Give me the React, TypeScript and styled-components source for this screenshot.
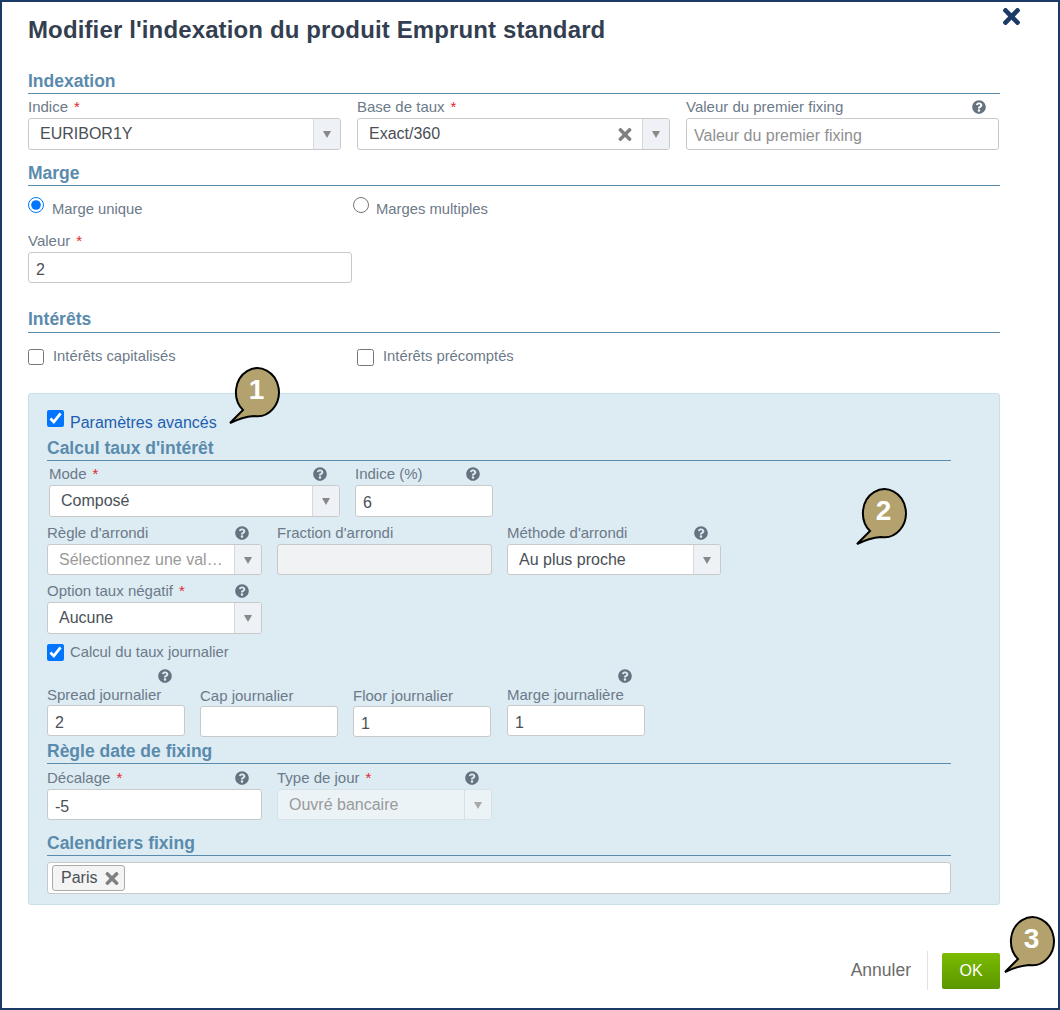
import React from "react";
import styled, { createGlobalStyle } from "styled-components";
import { FaQuestionCircle, FaTimes } from "react-icons/fa";

const GlobalStyle = createGlobalStyle`
  html, body {
    margin: 0;
    padding: 0;
    background: #fff;
  }
  * {
    box-sizing: border-box;
  }
  body {
    font-family: "Liberation Sans", Arial, sans-serif;
  }
`;

const Frame = styled.div`
  position: relative;
  width: 1060px;
  height: 1010px;
  padding: 15px 58px 0 26px;
  border: 2px solid #1c3a66;
  background: #fff;
  overflow: hidden;
`;

const Title = styled.h1`
  margin: 0;
  font-size: 24px;
  line-height: 26px;
  font-weight: 700;
  letter-spacing: 0.13px;
  color: #333f50;
`;

const CloseButton = styled.div`
  position: absolute;
  top: 2px;
  right: 34px;
  color: #1c3a66;
  font-size: 25px;
  line-height: 0;
`;

const SectionTitle = styled.h2<{ $top: number; $pad?: number }>`
  margin: ${(p) => p.$top}px 0 0;
  padding-bottom: ${(p) => p.$pad ?? 2}px;
  font-size: 17.5px;
  line-height: 20px;
  font-weight: 700;
  color: #5a8bad;
  border-bottom: 1px solid #5a8bad;
`;

const Row = styled.div<{ $top?: number; $indent?: number; $gap?: number }>`
  display: flex;
  align-items: flex-start;
  gap: ${(p) => p.$gap ?? 15}px;
  margin-top: ${(p) => p.$top ?? 0}px;
  padding-left: ${(p) => p.$indent ?? 0}px;
`;

const FieldBox = styled.div<{ $width: number; $down?: number; $left?: number }>`
  width: ${(p) => p.$width}px;
  flex: none;
  margin-top: ${(p) => p.$down ?? 0}px;
  margin-left: ${(p) => p.$left ?? 0}px;
`;

const LabelRow = styled.div<{ $height?: number }>`
  display: flex;
  align-items: center;
  justify-content: space-between;
  height: ${(p) => p.$height ?? 24}px;
  padding-right: 13px;
  font-size: 15px;
  color: #6c7a89;
  white-space: nowrap;
`;

const Star = styled.span`
  margin-left: 6px;
  color: #e0262d;
`;

const HelpRow = styled.div`
  display: flex;
  justify-content: flex-end;
  height: 14px;
  padding-right: 13px;
`;

const Help = styled(FaQuestionCircle)`
  flex: none;
  width: 14px;
  height: 14px;
  margin-top: 2px;
  color: #667280;

  ${HelpRow} & {
    margin-top: 0;
  }
`;

const TextInput = styled.input<{ $height?: number }>`
  display: block;
  width: 100%;
  height: ${(p) => p.$height ?? 32}px;
  padding: 4px 7px 0;
  border: 1px solid #c9c9c9;
  border-radius: 3px;
  background: #fff;
  font-family: inherit;
  font-size: 16px;
  color: #495057;
  outline: none;

  &::placeholder {
    color: #8f8f8f;
    opacity: 1;
  }

  &:disabled {
    background: #f1f2f3;
  }
`;

const SelectBox = styled.div<{ $height?: number; $disabled?: boolean }>`
  display: flex;
  align-items: stretch;
  height: ${(p) => p.$height ?? 32}px;
  border: 1px solid ${(p) => (p.$disabled ? "#d6e2e8" : "#c9c9c9")};
  border-radius: 3px;
  overflow: hidden;
  background: ${(p) => (p.$disabled ? "#ebf3f7" : "#fff")};
`;

const SelectValue = styled.div<{ $muted?: boolean }>`
  flex: 1;
  min-width: 0;
  padding-left: 11px;
  padding-right: 10px;
  font-size: 16px;
  line-height: 29px;
  color: ${(p) => (p.$muted ? "#9a9a9a" : "#495057")};
  white-space: nowrap;
  overflow: hidden;
  text-overflow: ellipsis;
`;

const ClearIcon = styled(FaTimes)`
  flex: none;
  align-self: center;
  width: 14px;
  height: 19px;
  margin-right: 10px;
  color: #808080;
`;

const ArrowBox = styled.div<{ $disabled?: boolean }>`
  flex: none;
  display: flex;
  align-items: center;
  justify-content: center;
  width: 27px;
  border-left: 1px solid ${(p) => (p.$disabled ? "#d6e2e8" : "#d9d9d9")};
  background: ${(p) => (p.$disabled ? "#ebf3f7" : "#eef1f5")};

  &::after {
    content: "";
    border-left: 4.5px solid transparent;
    border-right: 4.5px solid transparent;
    border-top: 7px solid ${(p) => (p.$disabled ? "#a9a9a9" : "#888")};
    margin-top: 1px;
  }
`;

const ChoiceRow = styled.div<{ $top: number; $height?: number }>`
  display: flex;
  align-items: flex-start;
  height: ${(p) => p.$height ?? 20}px;
  margin-top: ${(p) => p.$top}px;
`;

const Choice = styled.label<{ $width?: number; $gap?: number; $drop?: number }>`
  display: flex;
  align-items: flex-start;
  gap: ${(p) => p.$gap ?? 8}px;
  width: ${(p) => (p.$width ? `${p.$width}px` : "auto")};
  font-size: 14.8px;
  line-height: 16px;
  color: #6c7a89;

  & > span {
    margin-top: ${(p) => p.$drop ?? 0}px;
  }
`;

const Radio = styled.input.attrs({ type: "radio" })`
  flex: none;
  width: 16px;
  height: 16px;
  margin: 0;
`;

const Check = styled.input.attrs({ type: "checkbox" })<{ $size?: number }>`
  flex: none;
  width: ${(p) => p.$size ?? 17}px;
  height: ${(p) => p.$size ?? 17}px;
  margin: 0;
`;

const Panel = styled.section`
  margin-top: 28px;
  height: 512px;
  padding: 16px 48px 0 18px;
  border: 1px solid #c8dfe9;
  border-radius: 3px;
  background: #ddebf3;
`;

const AdvancedText = styled.span`
  font-size: 16px;
  line-height: 20px;
  color: #1d5fb0;
`;

const MultiBox = styled.div`
  display: flex;
  align-items: center;
  height: 32px;
  margin-top: 6px;
  padding-left: 4px;
  border: 1px solid #c9c9c9;
  border-radius: 3px;
  background: #fff;
`;

const Chip = styled.div`
  display: flex;
  align-items: center;
  gap: 8px;
  width: 73px;
  height: 26px;
  padding-left: 8px;
  border: 1px solid #aaa;
  border-radius: 3px;
  background: #f4f4f4;
  font-size: 16px;
  color: #495057;
`;

const ChipRemove = styled(FaTimes)`
  width: 14px;
  height: 19px;
  color: #808080;
`;

const Footer = styled.footer`
  display: flex;
  align-items: center;
  justify-content: flex-end;
  height: 39px;
  margin-top: 46px;
`;

const CancelLink = styled.span`
  font-size: 17.5px;
  color: #6b6b6b;
`;

const Divider = styled.div`
  width: 1px;
  height: 39px;
  margin: 0 14px 0 16px;
  background: #e2e2e2;
`;

const OkButton = styled.div`
  width: 58px;
  height: 36px;
  border-radius: 2px;
  background: linear-gradient(#7cbb00, #5a9600);
  color: #fff;
  font-size: 16px;
  line-height: 36px;
  text-align: center;
`;

const CalloutBox = styled.div<{ $x: number; $y: number }>`
  position: absolute;
  left: ${(p) => p.$x}px;
  top: ${(p) => p.$y}px;
  width: 54px;
  height: 60px;
`;

const CalloutDigit = styled.span`
  position: absolute;
  left: 7px;
  top: 7px;
  width: 43px;
  font-size: 28px;
  line-height: 36px;
  font-weight: 700;
  text-align: center;
  color: #fff;
`;

type CalloutProps = { n: number; x: number; y: number };

const Callout = ({ n, x, y }: CalloutProps) => (
  <CalloutBox $x={x} $y={y}>
    <svg width="54" height="60" viewBox="0 0 54 60">
      <path
        d="M2 58 L15 45 A21.5 24 0 1 1 26 50.9 Q14 52 2 58 Z"
        fill="#b3a26e"
        stroke="#000"
        strokeWidth="2"
        strokeLinejoin="miter"
      />
    </svg>
    <CalloutDigit>{n}</CalloutDigit>
  </CalloutBox>
);

type FieldLabelProps = { text: string; required?: boolean; help?: boolean };

const FieldLabel = ({ text, required, help }: FieldLabelProps) => (
  <LabelRow>
    <span>
      {text}
      {required && <Star>*</Star>}
    </span>
    {help && <Help />}
  </LabelRow>
);

type SelectProps = {
  value: string;
  height?: number;
  muted?: boolean;
  clearable?: boolean;
  disabled?: boolean;
};

const Select = ({ value, height, muted, clearable, disabled }: SelectProps) => (
  <SelectBox $height={height} $disabled={disabled}>
    <SelectValue $muted={muted}>{value}</SelectValue>
    {clearable && <ClearIcon />}
    <ArrowBox $disabled={disabled} />
  </SelectBox>
);

export default function App() {
  return (
    <>
      <GlobalStyle />
      <Frame>
        <Title>Modifier l'indexation du produit Emprunt standard</Title>
        <CloseButton>
          <FaTimes />
        </CloseButton>

        <SectionTitle $top={28}>Indexation</SectionTitle>
        <Row $gap={16}>
          <FieldBox $width={313}>
            <FieldLabel text="Indice" required />
            <Select value="EURIBOR1Y" />
          </FieldBox>
          <FieldBox $width={313}>
            <FieldLabel text="Base de taux" required />
            <Select value="Exact/360" clearable />
          </FieldBox>
          <FieldBox $width={313}>
            <FieldLabel text="Valeur du premier fixing" help />
            <TextInput placeholder="Valeur du premier fixing" readOnly />
          </FieldBox>
        </Row>

        <SectionTitle $top={13}>Marge</SectionTitle>
        <ChoiceRow $top={11}>
          <Choice $width={325} $drop={4}>
            <Radio name="marge" defaultChecked />
            <span>Marge unique</span>
          </Choice>
          <Choice $gap={7} $drop={4}>
            <Radio name="marge" />
            <span>Marges multiples</span>
          </Choice>
        </ChoiceRow>
        <Row $top={11}>
          <FieldBox $width={324}>
            <FieldLabel text="Valeur" required />
            <TextInput $height={31} defaultValue="2" />
          </FieldBox>
        </Row>

        <SectionTitle $top={26} $pad={3}>
          Intérêts
        </SectionTitle>
        <ChoiceRow $top={16} $height={16}>
          <Choice $width={329} $gap={9} $drop={-1}>
            <Check $size={16} />
            <span>Intérêts capitalisés</span>
          </Choice>
          <Choice $gap={9} $drop={-1}>
            <Check />
            <span>Intérêts précomptés</span>
          </Choice>
        </ChoiceRow>

        <Panel>
          <ChoiceRow $top={0} $height={17}>
            <Choice $gap={6} $drop={3}>
              <Check defaultChecked />
              <AdvancedText>Paramètres avancés</AdvancedText>
            </Choice>
          </ChoiceRow>

          <SectionTitle $top={11}>Calcul taux d'intérêt</SectionTitle>
          <Row $indent={2}>
            <FieldBox $width={291}>
              <FieldLabel text="Mode" required help />
              <Select value="Composé" />
            </FieldBox>
            <FieldBox $width={138}>
              <FieldLabel text="Indice (%)" help />
              <TextInput defaultValue="6" />
            </FieldBox>
          </Row>
          <Row $top={3}>
            <FieldBox $width={215}>
              <FieldLabel text="Règle d'arrondi" help />
              <Select value="Sélectionnez une valeur" height={31} muted />
            </FieldBox>
            <FieldBox $width={215}>
              <FieldLabel text="Fraction d'arrondi" />
              <TextInput $height={31} disabled />
            </FieldBox>
            <FieldBox $width={214}>
              <FieldLabel text="Méthode d'arrondi" help />
              <Select value="Au plus proche" height={31} />
            </FieldBox>
          </Row>
          <Row $top={3}>
            <FieldBox $width={215}>
              <FieldLabel text="Option taux négatif" required help />
              <Select value="Aucune" />
            </FieldBox>
          </Row>
          <ChoiceRow $top={10} $height={18}>
            <Choice $gap={6}>
              <Check defaultChecked />
              <span>Calcul du taux journalier</span>
            </Choice>
          </ChoiceRow>
          <Row $top={7}>
            <FieldBox $width={138}>
              <HelpRow>
                <Help />
              </HelpRow>
              <LabelRow $height={22}>Spread journalier</LabelRow>
              <TextInput $height={31} defaultValue="2" />
            </FieldBox>
            <FieldBox $width={138} $down={15}>
              <LabelRow $height={22}>Cap journalier</LabelRow>
              <TextInput $height={31} />
            </FieldBox>
            <FieldBox $width={138} $down={15}>
              <LabelRow $height={22}>Floor journalier</LabelRow>
              <TextInput $height={31} defaultValue="1" />
            </FieldBox>
            <FieldBox $width={138} $left={1}>
              <HelpRow>
                <Help />
              </HelpRow>
              <LabelRow $height={22}>Marge journalière</LabelRow>
              <TextInput $height={31} defaultValue="1" />
            </FieldBox>
          </Row>

          <SectionTitle $top={4}>Règle date de fixing</SectionTitle>
          <Row $top={1}>
            <FieldBox $width={215}>
              <FieldLabel text="Décalage" required help />
              <TextInput $height={31} defaultValue="-5" />
            </FieldBox>
            <FieldBox $width={215}>
              <FieldLabel text="Type de jour" required help />
              <Select value="Ouvré bancaire" height={31} muted disabled />
            </FieldBox>
          </Row>

          <SectionTitle $top={13}>Calendriers fixing</SectionTitle>
          <MultiBox>
            <Chip>
              Paris
              <ChipRemove />
            </Chip>
          </MultiBox>
        </Panel>

        <Footer>
          <CancelLink>Annuler</CancelLink>
          <Divider />
          <OkButton>OK</OkButton>
        </Footer>

        <Callout n={1} x={226} y={363} />
        <Callout n={2} x={853} y={484} />
        <Callout n={3} x={1001} y={912} />
      </Frame>
    </>
  );
}
